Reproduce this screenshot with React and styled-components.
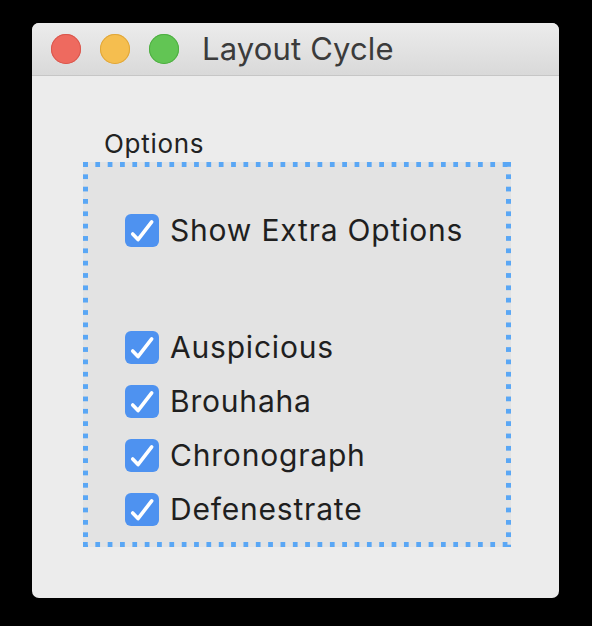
import React from 'react';
import styled, { createGlobalStyle } from 'styled-components';

const GlobalStyle = createGlobalStyle`
  html, body {
    margin: 0;
    background: #000;
  }
  body {
    font-family: Inter, "Liberation Sans", sans-serif;
  }
`;

const Screen = styled.div`
  padding: 23px 0 0 32px;
  width: 592px;
  height: 626px;
  box-sizing: border-box;
`;

const Window = styled.div`
  width: 527px;
  height: 575px;
  border-radius: 7px;
  background: #ececec;
  overflow: hidden;
  display: flex;
  flex-direction: column;
`;

const TitleBar = styled.div`
  height: 52px;
  flex: none;
  display: flex;
  align-items: center;
  padding-left: 19px;
  gap: 19px;
  background: linear-gradient(#ececec, #d9d9d9);
  border-bottom: 1px solid #c6c6c6;
`;

const Light = styled.span`
  width: 30px;
  height: 30px;
  border-radius: 50%;
  background: ${p => p.color};
  box-shadow: inset 0 0 0 1px ${p => p.edge};
`;

const Title = styled.div`
  margin-left: 4px;
  font-size: 31px;
  letter-spacing: 0.15px;
  color: #3b3b3b;
  line-height: 1;
  padding-bottom: 2px;
`;

const Content = styled.div`
  padding: 53px 0 0 51px;
`;

const Label = styled.div`
  font-size: 26px;
  letter-spacing: 0.7px;
  line-height: 30px;
  color: #222;
  margin-left: 21px;
  margin-bottom: 3px;
`;

const dot = '#5aa7f5';

const Group = styled.div`
  width: 428px;
  height: 385px;
  box-sizing: border-box;
  padding: 51px 0 0 42px;
  display: flex;
  flex-direction: column;
  gap: 20px;
  background:
    linear-gradient(90deg, ${dot} 5px, transparent 5px) left top / 12.35px 5px repeat-x,
    linear-gradient(90deg, ${dot} 5px, transparent 5px) left bottom / 12.35px 5px repeat-x,
    linear-gradient(${dot} 5px, transparent 5px) left top / 5px 12.35px repeat-y,
    linear-gradient(${dot} 5px, transparent 5px) right top / 5px 12.35px repeat-y,
    #e3e3e3;
`;

const Row = styled.label`
  display: flex;
  align-items: center;
  gap: 11px;
  height: 34px;
  margin-top: ${p => p.spaced ? '63px' : '0'};
  font-size: 30px;
  letter-spacing: 0.8px;
  color: #1f1f1f;
`;

const Box = styled.span`
  width: 34px;
  height: 33px;
  border-radius: 6px;
  background: #4e92f0;
  display: flex;
  flex: none;
`;

const Check = () => (
  <Box>
    <svg width="34" height="33" viewBox="0 0 34 33">
      <path d="M7.7 20 L13 25.6 L26.7 7.9" fill="none" stroke="#fff" strokeWidth="3.6" strokeLinecap="round" strokeLinejoin="round" />
    </svg>
  </Box>
);

const options = ['Auspicious', 'Brouhaha', 'Chronograph', 'Defenestrate'];

const App = () => {
  return (
    <Screen>
      <GlobalStyle />
      <Window>
        <TitleBar>
          <Light color="#ee6a5f" edge="#d9574d" />
          <Light color="#f5be4f" edge="#dfa63a" />
          <Light color="#62c554" edge="#4eae42" />
          <Title>Layout Cycle</Title>
        </TitleBar>
        <Content>
          <Label>Options</Label>
          <Group>
            <Row><Check />Show Extra Options</Row>
            {options.map((o, i) => (
              <Row key={o} spaced={i === 0}><Check />{o}</Row>
            ))}
          </Group>
        </Content>
      </Window>
    </Screen>
  );
};

export default App;
